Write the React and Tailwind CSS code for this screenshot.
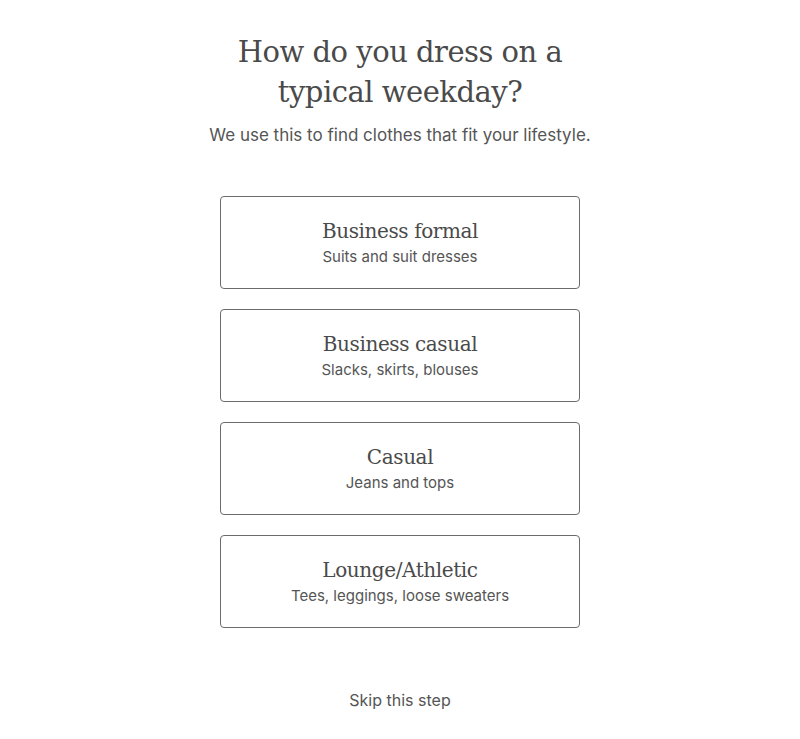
const options = [
  { title: 'Business formal', sub: 'Suits and suit dresses' },
  { title: 'Business casual', sub: 'Slacks, skirts, blouses' },
  { title: 'Casual', sub: 'Jeans and tops' },
  { title: 'Lounge/Athletic', sub: 'Tees, leggings, loose sweaters' },
];

export default function App() {
  return (
    <div className="min-h-screen bg-white flex flex-col items-center pt-[32px] text-[#4a4a4a] font-['Inter',sans-serif]">
      <h1 className="text-[29px] leading-[40px] text-center font-['DejaVu_Serif',serif] tracking-[-0.5px] text-[#4a4a4a] w-[380px] font-normal">
        How do you dress on a typical weekday?
      </h1>
      <p className="mt-[11px] text-[17px] leading-[24px] text-[#555]">
        We use this to find clothes that fit your lifestyle.
      </p>

      <div className="mt-[49px] flex flex-col gap-[20px] w-[360px]">
        {options.map((o) => (
          <button
            key={o.title}
            className="h-[93px] w-full border border-[#6b6b6b] rounded-[4px] bg-white flex flex-col items-center justify-center"
          >
            <span className="text-[20px] leading-[26px] font-['DejaVu_Serif',serif] tracking-[-0.4px] text-[#4a4a4a]">{o.title}</span>
            <span className="mt-[3px] text-[15px] leading-[20px] text-[#555]">{o.sub}</span>
          </button>
        ))}
      </div>

      <button className="mt-[61px] text-[16px] leading-[22px] text-[#555]">Skip this step</button>
    </div>
  );
}
